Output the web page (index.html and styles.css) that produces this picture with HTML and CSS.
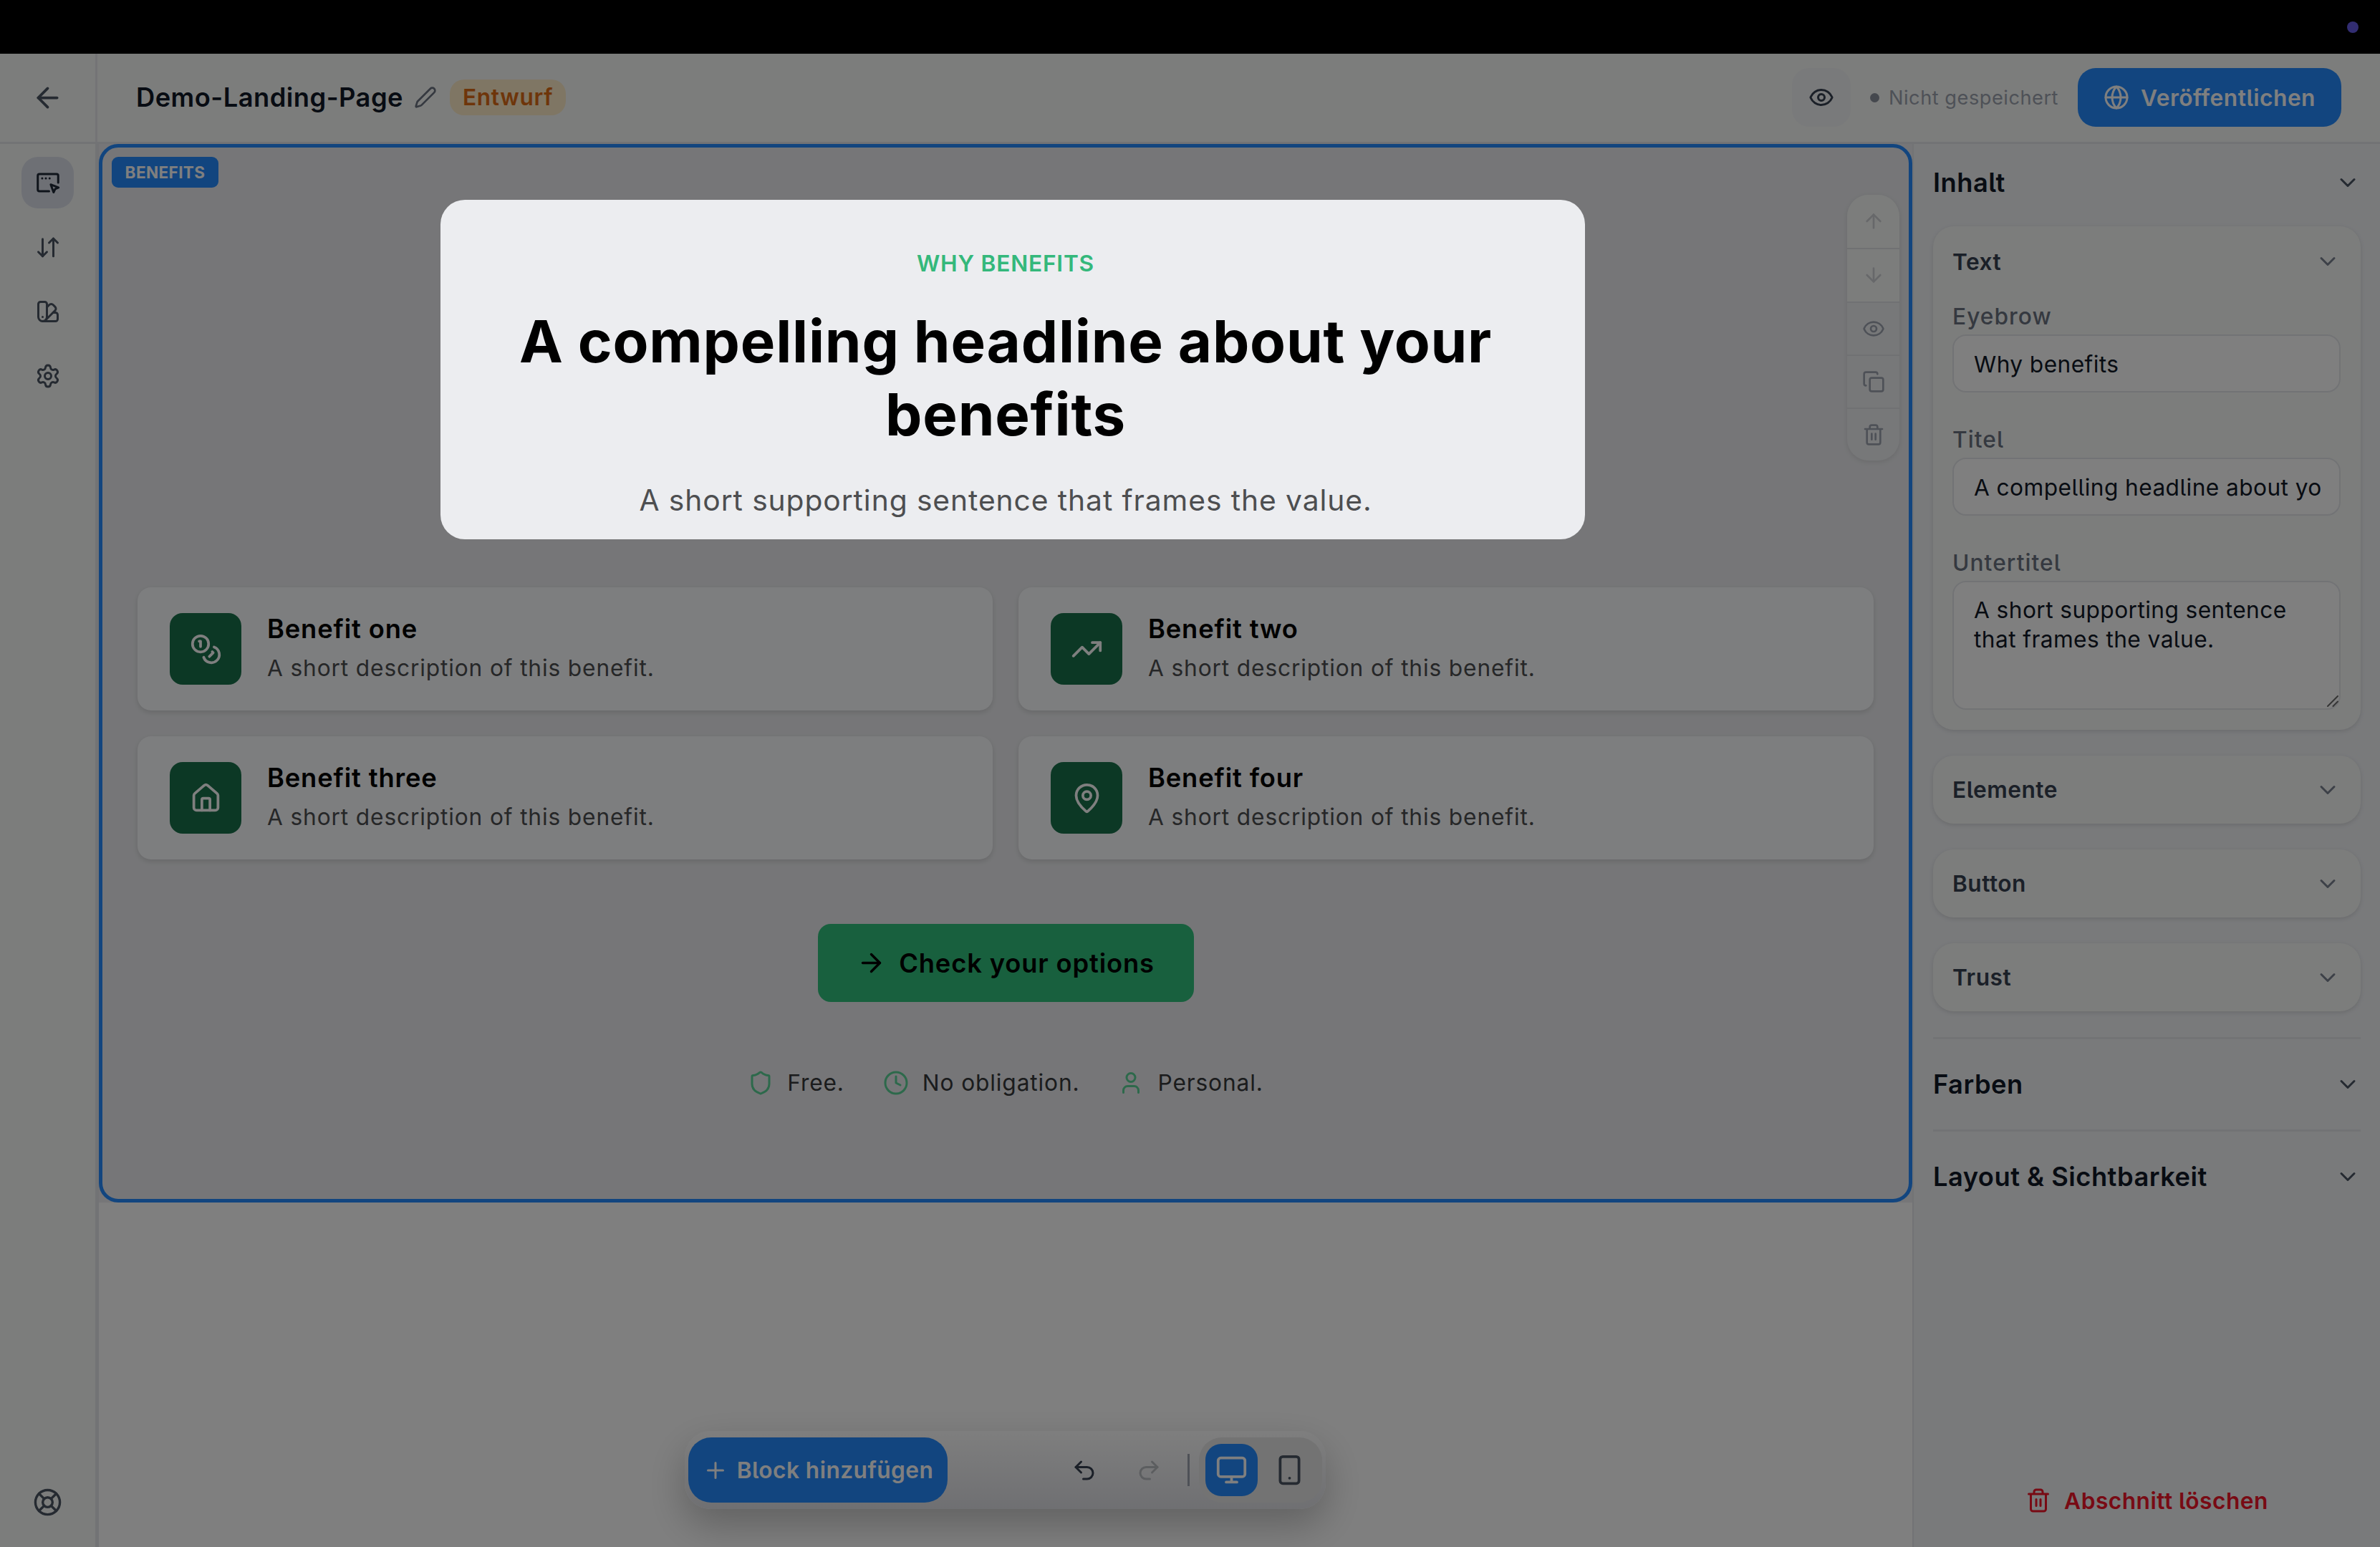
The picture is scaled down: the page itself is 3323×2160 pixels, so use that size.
FILE: index.html
```html
<!DOCTYPE html>
<html lang="de">
<head>
    <meta charset="UTF-8">
    <meta name="viewport" content="width=device-width, initial-scale=1.0">
    <title>Demo-Landing-Page</title>
    <link rel="stylesheet" href="styles.css">
</head>
<body>
    <!-- Icons -->
    <svg class="sprite" xmlns="http://www.w3.org/2000/svg">
        <symbol id="arrow-left" viewBox="0 0 24 24"><path d="m12 19-7-7 7-7"/><path d="M19 12H5"/></symbol>
        <symbol id="arrow-right" viewBox="0 0 24 24"><path d="M5 12h14"/><path d="m12 5 7 7-7 7"/></symbol>
        <symbol id="arrow-up" viewBox="0 0 24 24"><path d="m5 12 7-7 7 7"/><path d="M12 19V5"/></symbol>
        <symbol id="arrow-down" viewBox="0 0 24 24"><path d="M12 5v14"/><path d="m19 12-7 7-7-7"/></symbol>
        <symbol id="pen" viewBox="0 0 24 24"><path d="M21.174 6.812a1 1 0 0 0-3.986-3.987L3.842 16.174a2 2 0 0 0-.5.83l-1.321 4.352a.5.5 0 0 0 .623.622l4.353-1.32a2 2 0 0 0 .83-.497z"/></symbol>
        <symbol id="eye" viewBox="0 0 24 24"><path d="M2.062 12.348a1 1 0 0 1 0-.696 10.75 10.75 0 0 1 19.876 0 1 1 0 0 1 0 .696 10.75 10.75 0 0 1-19.876 0"/><circle cx="12" cy="12" r="3"/></symbol>
        <symbol id="globe" viewBox="0 0 24 24"><circle cx="12" cy="12" r="10"/><path d="M12 2a14.5 14.5 0 0 0 0 20 14.5 14.5 0 0 0 0-20"/><path d="M2 12h20"/></symbol>
        <symbol id="editor" viewBox="0 0 24 24"><path d="M13 20H4a1.5 1.5 0 0 1-1.5-1.5v-13A1.5 1.5 0 0 1 4 4h16a1.5 1.5 0 0 1 1.5 1.5V12"/><path d="M6.6 8h.01M10 8h.01M13.5 8h.01"/><path d="m14.6 13.8 7.2 2.8-3.1 1.3-1.5 3.1z"/></symbol>
        <symbol id="sort" viewBox="0 0 24 24"><path d="m3 16.5 4 4 4-4"/><path d="M7 20.5v-16"/><path d="m21 8-4-4-4 4"/><path d="M17 4v16.5"/></symbol>
        <symbol id="swatch" viewBox="0 0 24 24"><path d="M11 17a4 4 0 0 1-8 0V5a2 2 0 0 1 2-2h4a2 2 0 0 1 2 2Z"/><path d="M16.7 13H19a2 2 0 0 1 2 2v4a2 2 0 0 1-2 2H7"/><path d="M7 17h.01"/><path d="m11 8 2.3-2.3a2.4 2.4 0 0 1 3.404.004L18.6 7.6a2.4 2.4 0 0 1 .026 3.434L9.9 19.8"/></symbol>
        <symbol id="settings" viewBox="0 0 24 24"><path d="M9.671 4.136a2.34 2.34 0 0 1 4.659 0 2.34 2.34 0 0 0 3.319 1.915 2.34 2.34 0 0 1 2.33 4.033 2.34 2.34 0 0 0 0 3.831 2.34 2.34 0 0 1-2.33 4.033 2.34 2.34 0 0 0-3.319 1.915 2.34 2.34 0 0 1-4.659 0 2.34 2.34 0 0 0-3.32-1.915 2.34 2.34 0 0 1-2.33-4.033 2.34 2.34 0 0 0 0-3.831A2.34 2.34 0 0 1 6.35 6.051a2.34 2.34 0 0 0 3.319-1.915"/><circle cx="12" cy="12" r="3"/></symbol>
        <symbol id="life-buoy" viewBox="0 0 24 24"><circle cx="12" cy="12" r="10"/><path d="m4.93 4.93 4.24 4.24M14.83 9.17l4.24-4.24M14.83 14.83l4.24 4.24M9.17 14.83l-4.24 4.24"/><circle cx="12" cy="12" r="4"/></symbol>
        <symbol id="copy" viewBox="0 0 24 24"><rect x="8" y="8" width="14" height="14" rx="2"/><path d="M4 16c-1.1 0-2-.9-2-2V4c0-1.1.9-2 2-2h10c1.1 0 2 .9 2 2"/></symbol>
        <symbol id="trash" viewBox="0 0 24 24"><path d="M10 11v6M14 11v6M19 6v14a2 2 0 0 1-2 2H7a2 2 0 0 1-2-2V6M3 6h18M8 6V4a2 2 0 0 1 2-2h4a2 2 0 0 1 2 2v2"/></symbol>
        <symbol id="chevron" viewBox="0 0 24 24"><path d="m6 9 6 6 6-6"/></symbol>
        <symbol id="grip" viewBox="0 0 16 16"><path d="M1 15 15 1M8.5 15 15 8.5"/></symbol>
        <symbol id="coins" viewBox="0 0 24 24"><circle cx="8" cy="8" r="6"/><path d="M18.09 10.37A6 6 0 1 1 10.34 18"/><path d="M7 6h1v4"/><path d="m16.71 13.88.7.71-2.82 2.82"/></symbol>
        <symbol id="trending" viewBox="0 0 24 24"><path d="M16 7h6v6"/><path d="m22 7-8.5 8.5-5-5L2 17"/></symbol>
        <symbol id="house" viewBox="0 0 24 24"><path d="M15 21v-8a1 1 0 0 0-1-1h-4a1 1 0 0 0-1 1v8"/><path d="M3 10a2 2 0 0 1 .709-1.528l7-5.999a2 2 0 0 1 2.582 0l7 5.999A2 2 0 0 1 21 10v9a2 2 0 0 1-2 2H5a2 2 0 0 1-2-2z"/></symbol>
        <symbol id="pin" viewBox="0 0 24 24"><path d="M20 10c0 4.993-5.539 10.193-7.399 11.799a1 1 0 0 1-1.202 0C9.539 20.193 4 14.993 4 10a8 8 0 0 1 16 0"/><circle cx="12" cy="10" r="3"/></symbol>
        <symbol id="shield" viewBox="0 0 24 24"><path d="M20 13c0 5-3.5 7.5-7.66 8.95a1 1 0 0 1-.67-.01C7.5 20.5 4 18 4 13V6a1 1 0 0 1 1-1c2 0 4.5-1.2 6.24-2.72a1.17 1.17 0 0 1 1.52 0C14.51 3.81 17 5 19 5a1 1 0 0 1 1 1z"/></symbol>
        <symbol id="clock" viewBox="0 0 24 24"><circle cx="12" cy="12" r="10"/><path d="M12 6v6l4 2"/></symbol>
        <symbol id="user" viewBox="0 0 24 24"><path d="M19 21v-2a4 4 0 0 0-4-4H9a4 4 0 0 0-4 4v2"/><circle cx="12" cy="7" r="4"/></symbol>
        <symbol id="plus" viewBox="0 0 24 24"><path d="M5 12h14M12 5v14"/></symbol>
        <symbol id="undo" viewBox="0 0 24 24"><path d="M9 14 4 9l5-5"/><path d="M4 9h10.5a5.5 5.5 0 0 1 0 11H11"/></symbol>
        <symbol id="redo" viewBox="0 0 24 24"><path d="m15 14 5-5-5-5"/><path d="M20 9H9.5a5.5 5.5 0 0 0 0 11H13"/></symbol>
        <symbol id="monitor" viewBox="0 0 24 24"><rect x="2" y="3" width="20" height="14" rx="2"/><path d="M8 21h8M12 17v4"/></symbol>
        <symbol id="phone" viewBox="0 0 24 24"><rect x="5" y="2" width="14" height="20" rx="2"/><path d="M12 18h.01"/></symbol>
    </svg>

    <div class="topbar"><span class="topbar-dot"></span></div>

    <header class="header">
        <a class="back" href="#"><svg class="icon icon-lg"><use href="#arrow-left"/></svg></a>
        <h1 class="page-title">Demo-Landing-Page</h1>
        <svg class="icon icon-sm edit-title"><use href="#pen"/></svg>
        <span class="status">Entwurf</span>
        <div class="header-actions">
            <button class="preview"><svg class="icon"><use href="#eye"/></svg></button>
            <span class="save-state">Nicht gespeichert</span>
            <button class="publish"><svg class="icon"><use href="#globe"/></svg>Veröffentlichen</button>
        </div>
    </header>

    <div class="workspace">
        <nav class="sidebar">
            <a class="nav-item active" href="#"><svg class="icon"><use href="#editor"/></svg></a>
            <a class="nav-item" href="#"><svg class="icon"><use href="#sort"/></svg></a>
            <a class="nav-item" href="#"><svg class="icon"><use href="#swatch"/></svg></a>
            <a class="nav-item" href="#"><svg class="icon"><use href="#settings"/></svg></a>
            <a class="nav-item help" href="#"><svg class="icon icon-md"><use href="#life-buoy"/></svg></a>
        </nav>

        <main class="canvas">
            <section class="block">
                <span class="block-label">BENEFITS</span>
                <div class="block-tools">
                    <button class="muted"><svg class="icon icon-sm"><use href="#arrow-up"/></svg></button>
                    <button class="muted"><svg class="icon icon-sm"><use href="#arrow-down"/></svg></button>
                    <button><svg class="icon icon-sm"><use href="#eye"/></svg></button>
                    <button><svg class="icon icon-sm"><use href="#copy"/></svg></button>
                    <button><svg class="icon icon-sm"><use href="#trash"/></svg></button>
                </div>

                <p class="eyebrow">WHY BENEFITS</p>
                <h2 class="headline">A compelling headline about your benefits</h2>
                <p class="subtitle">A short supporting sentence that frames the value.</p>

                <div class="benefits">
                    <article class="benefit">
                        <span class="benefit-icon"><svg class="icon icon-lg"><use href="#coins"/></svg></span>
                        <div>
                            <h3>Benefit one</h3>
                            <p>A short description of this benefit.</p>
                        </div>
                    </article>
                    <article class="benefit">
                        <span class="benefit-icon"><svg class="icon icon-lg"><use href="#trending"/></svg></span>
                        <div>
                            <h3>Benefit two</h3>
                            <p>A short description of this benefit.</p>
                        </div>
                    </article>
                    <article class="benefit">
                        <span class="benefit-icon"><svg class="icon icon-lg"><use href="#house"/></svg></span>
                        <div>
                            <h3>Benefit three</h3>
                            <p>A short description of this benefit.</p>
                        </div>
                    </article>
                    <article class="benefit">
                        <span class="benefit-icon"><svg class="icon icon-lg"><use href="#pin"/></svg></span>
                        <div>
                            <h3>Benefit four</h3>
                            <p>A short description of this benefit.</p>
                        </div>
                    </article>
                </div>

                <a class="cta" href="#"><svg class="icon icon-md"><use href="#arrow-right"/></svg>Check your options</a>

                <ul class="trust">
                    <li><svg class="icon"><use href="#shield"/></svg>Free.</li>
                    <li><svg class="icon"><use href="#clock"/></svg>No obligation.</li>
                    <li><svg class="icon"><use href="#user"/></svg>Personal.</li>
                </ul>
            </section>

            <div class="dock">
                <button class="add-block"><svg class="icon"><use href="#plus"/></svg>Block hinzufügen</button>
                <div class="history">
                    <button><svg class="icon"><use href="#undo"/></svg></button>
                    <button class="disabled"><svg class="icon"><use href="#redo"/></svg></button>
                </div>
                <div class="devices">
                    <button class="active"><svg class="icon icon-lg"><use href="#monitor"/></svg></button>
                    <button><svg class="icon icon-lg"><use href="#phone"/></svg></button>
                </div>
            </div>
        </main>

        <aside class="panel">
            <div class="panel-heading">Inhalt<svg class="icon"><use href="#chevron"/></svg></div>

            <div class="group group-open">
                <div class="group-heading">Text<svg class="icon"><use href="#chevron"/></svg></div>
                <label for="eyebrow">Eyebrow</label>
                <input type="text" id="eyebrow" value="Why benefits">
                <label for="title">Titel</label>
                <input type="text" id="title" value="A compelling headline about your benefits">
                <label for="subtitle">Untertitel</label>
                <div class="textarea-wrap">
                    <textarea id="subtitle">A short supporting sentence that frames the value.</textarea>
                    <svg class="icon grip"><use href="#grip"/></svg>
                </div>
            </div>
            <div class="group"><div class="group-heading">Elemente<svg class="icon"><use href="#chevron"/></svg></div></div>
            <div class="group"><div class="group-heading">Button<svg class="icon"><use href="#chevron"/></svg></div></div>
            <div class="group"><div class="group-heading">Trust<svg class="icon"><use href="#chevron"/></svg></div></div>

            <div class="panel-heading divided">Farben<svg class="icon"><use href="#chevron"/></svg></div>
            <div class="panel-heading divided">Layout &amp; Sichtbarkeit<svg class="icon"><use href="#chevron"/></svg></div>

            <button class="delete"><svg class="icon"><use href="#trash"/></svg>Abschnitt löschen</button>
        </aside>
    </div>

    <!-- Dims everything except the text area being edited -->
    <div class="spotlight"></div>
</body>
</html>
```
FILE: styles.css
```css
* {
    box-sizing: border-box;
}
body {
    margin: 0;
    width: 3323px;
    height: 2160px;
    display: flex;
    flex-direction: column;
    position: relative;
    overflow: hidden;
    background: #fff;
    color: #111827;
    font-family: Inter, "Liberation Sans", sans-serif;
    font-size: 31.7px;
    font-feature-settings: "cv05";
    letter-spacing: 0.015em;
}
h1, h2, h3, p, ul {
    margin: 0;
    padding: 0;
}
a {
    color: inherit;
    text-decoration: none;
}
button {
    display: flex;
    align-items: center;
    justify-content: center;
    padding: 0;
    border: none;
    background: none;
    color: inherit;
    font: inherit;
    font-feature-settings: inherit;
    letter-spacing: inherit;
}
.sprite {
    position: absolute;
    width: 0;
    height: 0;
}
.icon {
    width: 36px;
    height: 36px;
    flex: none;
    fill: none;
    stroke: currentColor;
    stroke-width: 2;
    stroke-linecap: round;
    stroke-linejoin: round;
}
.icon-sm {
    width: 32px;
    height: 32px;
}
.icon-md {
    width: 41px;
    height: 41px;
}
.icon-lg {
    width: 45px;
    height: 45px;
}

/* Top */
.topbar {
    height: 75px;
    flex: none;
    display: flex;
    align-items: center;
    justify-content: flex-end;
    padding-right: 30px;
    background: #000;
}
.topbar-dot {
    width: 16px;
    height: 16px;
    border-radius: 50%;
    background: #645be4;
}
.header {
    height: 126px;
    flex: none;
    display: flex;
    align-items: center;
    padding-right: 54px;
    padding-bottom: 1px;
    background: #f9fbf9;
    border-bottom: 3px solid #e5e6eb;
}
.back {
    width: 136px;
    height: 123px;
    display: flex;
    align-items: center;
    justify-content: center;
    border-right: 3px solid #e8e8ed;
    color: #4b5563;
}
.page-title {
    margin-left: 54px;
    font-size: 36.3px;
    font-weight: 600;
    letter-spacing: 0.013em;
}
.edit-title {
    margin: 0 18px 0 15px;
    color: #6b7280;
}
.status {
    height: 50px;
    line-height: 50px;
    padding: 0 18px;
    border-radius: 20px;
    background: #feecc8;
    color: #dc6b14;
    font-weight: 600;
    letter-spacing: 0.02em;
}
.header-actions {
    display: flex;
    align-items: center;
    margin-left: auto;
}
.preview {
    width: 82px;
    height: 82px;
    border-radius: 24px;
    background: #f3f4f6;
    color: #374151;
}
.save-state {
    display: flex;
    align-items: center;
    gap: 13px;
    margin: 0 27px;
    font-size: 27.2px;
    letter-spacing: 0.019em;
    color: #9ca3af;
}
.save-state::before {
    content: "";
    width: 13px;
    height: 13px;
    border-radius: 50%;
    background: #8b919d;
}
.publish {
    width: 368px;
    height: 82px;
    gap: 16px;
    border-radius: 25px;
    background: #248bff;
    color: #fff;
    font-weight: 600;
}

.workspace {
    flex: 1;
    display: flex;
    min-height: 0;
}

/* Sidebar */
.sidebar {
    width: 138px;
    flex: none;
    display: flex;
    flex-direction: column;
    gap: 18px;
    padding: 18px 0 27px 30px;
    background: #f9fbf9;
    border-right: 5px solid #e5e7eb;
}
.nav-item {
    width: 73px;
    height: 72px;
    display: flex;
    align-items: center;
    justify-content: center;
    border-radius: 23px;
    color: #4b5563;
}
.nav-item.active {
    background: #dce0eb;
    color: #1f2937;
}
.nav-item.help {
    margin-top: auto;
}

/* Canvas */
.canvas {
    position: relative;
    width: 2532px;
    flex: none;
    background: #fff;
}
.block {
    position: relative;
    height: 1478px;
    padding: 144px 54px 0;
    display: flex;
    flex-direction: column;
    align-items: center;
    background: #ecedf0;
    color: #000;
    font-feature-settings: normal;
    letter-spacing: 0.027em;
}
.block::after {
    content: "";
    position: absolute;
    inset: 0;
    border: 5px solid #248bff;
    border-radius: 27px;
}
.block-label {
    position: absolute;
    left: 18px;
    top: 18px;
    width: 149px;
    height: 43px;
    line-height: 43px;
    text-align: center;
    border-radius: 9px;
    background: #248bff;
    color: #fff;
    font-size: 22.6px;
    font-weight: 700;
    letter-spacing: 0.015em;
}
.block-tools {
    position: absolute;
    right: 18px;
    top: 71px;
    width: 73px;
    border-radius: 30px;
    overflow: hidden;
    background: #eef0f3;
    box-shadow: 0 2px 7px rgba(0, 0, 0, 0.1);
    color: #9ca3af;
}
.block-tools button {
    width: 100%;
    height: 74.3px;
}
.block-tools button + button {
    border-top: 2px solid #e0e2e6;
}
.block-tools .muted {
    background: #f8faf8;
    color: #cfd1d5;
}
.eyebrow {
    line-height: 45px;
    font-size: 31.7px;
    font-weight: 600;
    letter-spacing: 0.024em;
    color: #34b87b;
}
.headline {
    width: 1480px;
    margin-top: 36px;
    text-align: center;
    font-size: 81.6px;
    line-height: 101.6px;
    font-weight: 700;
    letter-spacing: 0.0095em;
}
.subtitle {
    margin-top: 37px;
    font-size: 40.8px;
    line-height: 64px;
    letter-spacing: 0.022em;
    color: #4d4e50;
}
.benefits {
    width: 100%;
    margin-top: 90px;
    display: grid;
    grid-template-columns: 1fr 1fr;
    gap: 36px;
}
.benefit {
    height: 172px;
    display: flex;
    align-items: center;
    gap: 36px;
    padding-left: 45px;
    border-radius: 19px;
    background: #fbfcfe;
    box-shadow: 0 3px 7px rgba(0, 0, 0, 0.12);
}
.benefit-icon {
    width: 100px;
    height: 100px;
    display: flex;
    align-items: center;
    justify-content: center;
    border-radius: 18px;
    background: #18704a;
    color: #fff;
}
.benefit h3 {
    font-size: 36.3px;
    line-height: 54px;
    font-weight: 600;
}
.benefit p {
    margin: 2px 0 3px;
    line-height: 51px;
    color: #4d4e50;
}
.cta {
    width: 525px;
    height: 109px;
    margin-top: 90px;
    display: flex;
    align-items: center;
    justify-content: center;
    gap: 18px;
    border-radius: 18px;
    background: #30c07c;
    font-size: 36.3px;
    font-weight: 600;
}
.trust {
    display: flex;
    gap: 54px;
    margin-top: 88px;
    line-height: 50px;
    list-style: none;
    color: #36383b;
}
.trust li {
    display: flex;
    align-items: center;
    gap: 19px;
}
.trust .icon {
    color: #5ad397;
}

/* Floating toolbar */
.dock {
    position: absolute;
    left: 818px;
    bottom: 53px;
    width: 895px;
    height: 109px;
    display: flex;
    align-items: center;
    padding: 9px 5px;
    border-radius: 36px;
    background: linear-gradient(#fdfdfd, #dfe0e5);
    box-shadow: 0 22px 54px rgba(0, 0, 0, 0.24);
}
.add-block {
    width: 362px;
    height: 91px;
    gap: 12px;
    border-radius: 32px;
    background: #248bff;
    color: #fff;
    font-weight: 600;
    letter-spacing: 0.014em;
}
.history {
    display: flex;
    align-items: center;
    height: 45px;
    margin-left: auto;
    padding-right: 9px;
    border-right: 3px solid #9ca3af;
    color: #374151;
}
.history button {
    width: 90px;
}
.history .disabled {
    color: #b9bcc1;
}
.devices {
    height: 91px;
    display: flex;
    gap: 8px;
    margin-left: 13px;
    padding: 9px;
    border-radius: 32px;
    background: #e6e6e6;
    color: #4b5563;
}
.devices button {
    width: 73px;
    border-radius: 22px;
}
.devices .active {
    background: #248bff;
    color: #fff;
}

/* Settings panel */
.panel {
    flex: 1;
    display: flex;
    flex-direction: column;
    padding: 0 27px;
    background: #f2f4f7;
    border-left: 2px solid #e5e7eb;
}
.panel-heading {
    height: 107px;
    flex: none;
    display: flex;
    align-items: center;
    justify-content: space-between;
    font-size: 36.3px;
    font-weight: 600;
}
.panel-heading .icon {
    color: #4b5563;
}
.panel-heading.divided {
    height: 129px;
    border-top: 3px solid #e5e7eb;
}
.group {
    flex: none;
    margin-bottom: 36px;
    padding: 0 28px 0 27px;
    border-radius: 29px;
    background: #f9fbf9;
    box-shadow: 0 2px 6px rgba(0, 0, 0, 0.12);
}
.group-open {
    height: 703px;
    margin-top: 8px;
}
.group-heading {
    height: 95px;
    display: flex;
    align-items: center;
    justify-content: space-between;
    color: #374151;
    font-weight: 600;
}
.group-open .group-heading {
    padding-top: 3px;
}
.group-heading .icon {
    color: #7b8290;
}
.group label {
    display: block;
    margin-top: 43px;
    line-height: 45px;
    font-weight: 500;
    letter-spacing: 0.033em;
    color: #6b7280;
}
.group-heading + label {
    margin-top: 8px;
}
.group input, .group textarea {
    display: block;
    width: 542px;
    height: 81px;
    margin-top: 3px;
    padding: 2px 26px 0 28px;
    border: 2px solid #e5e7eb;
    border-radius: 19px;
    background: #fff;
    color: #111827;
    font: inherit;
    font-feature-settings: inherit;
    letter-spacing: 0.013em;
}
.textarea-wrap {
    position: relative;
}
.group textarea {
    height: 180px;
    padding-top: 19px;
    line-height: 40.8px;
    resize: none;
    overflow: hidden;
}
.grip {
    position: absolute;
    right: 3px;
    bottom: 4px;
    width: 16px;
    height: 16px;
    color: #6b6b6b;
}
.delete {
    gap: 18px;
    margin-top: auto;
    margin-bottom: 40px;
    height: 50px;
    color: #f01428;
    font-weight: 600;
}

/* Spotlight */
.spotlight {
    position: absolute;
    left: 615px;
    top: 279px;
    width: 1598px;
    height: 474px;
    border-radius: 34px;
    box-shadow: 0 0 0 4000px rgba(0, 0, 0, 0.5);
}
```
